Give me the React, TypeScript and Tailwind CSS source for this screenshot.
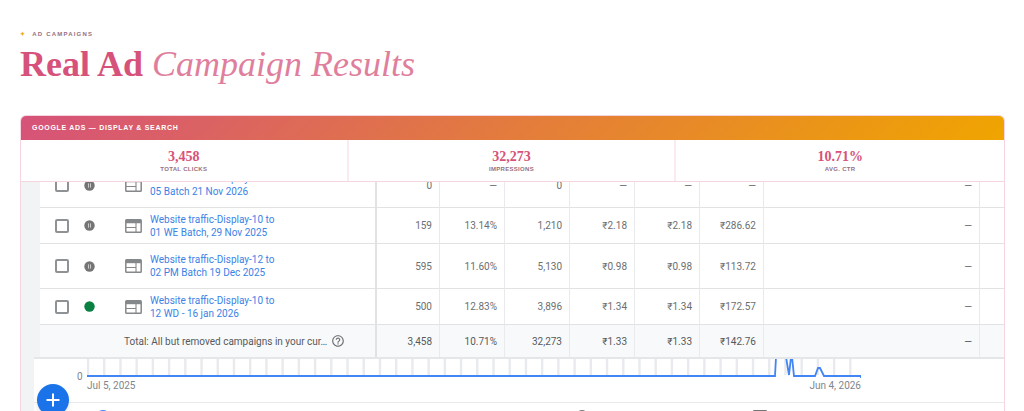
import { MdHelpOutline } from 'react-icons/md'

type Campaign = {
    name: string[]
    active: boolean
    values: string[]
    height: string
}

const stats = [
    { value: '3,458', label: 'Total Clicks' },
    { value: '32,273', label: 'Impressions' },
    { value: '10.71%', label: 'Avg. CTR' },
]

const campaigns: Campaign[] = [
    { name: ['Website traffic-Display-08 to', '05 Batch 21 Nov 2026'], active: false, values: ['0', '—', '0', '—', '—', '—', '—'], height: 'h-[45px]' },
    { name: ['Website traffic-Display-10 to', '01 WE Batch, 29 Nov 2025'], active: false, values: ['159', '13.14%', '1,210', '₹2.18', '₹2.18', '₹286.62', '—'], height: 'h-9' },
    { name: ['Website traffic-Display-12 to', '02 PM Batch 19 Dec 2025'], active: false, values: ['595', '11.60%', '5,130', '₹0.98', '₹0.98', '₹113.72', '—'], height: 'h-[45px]' },
    { name: ['Website traffic-Display-10 to', '12 WD - 16 jan 2026'], active: true, values: ['500', '12.83%', '3,896', '₹1.34', '₹1.34', '₹172.57', '—'], height: 'h-9' },
]

const totals = ['3,458', '10.71%', '32,273', '₹1.33', '₹1.33', '₹142.76', '—']

const gridLines = Array.from({ length: 48 }, (_, i) => 1 + i * 16.22)

function StatusIcon({ active }: { active: boolean }) {
    return (
        <svg viewBox="0 0 11 11" className="block size-[11px]">
            <circle cx="5.5" cy="5.5" r="5.2" fill={active ? '#0b8043' : '#757575'} />
            {!active && <path d="M4.5 3.4V7.6M6.5 3.4V7.6" stroke="#d5d6d7" strokeWidth="0.9" />}
        </svg>
    )
}

function DisplayIcon() {
    return (
        <svg viewBox="0 0 17 14" className="h-3.5 w-[17px] shrink-0" fill="none" stroke="#85888b">
            <rect x="0.8" y="0.8" width="15.4" height="12.4" rx="0.8" strokeWidth="1.5" />
            <path d="M1 2.5H16" strokeWidth="3.4" />
            <path d="M1 8.5H11M11 4V13" strokeWidth="1.1" />
        </svg>
    )
}

function StatsBar() {
    return (
        <div className="grid grid-cols-3 border-b border-[#f5d5df] bg-white">
            {stats.map((s) => (
                <div key={s.label} className="flex h-[41px] flex-col items-center justify-center border-r-2 border-[#fbeaf0] pt-0.5 last:border-r-0">
                    <span className="font-['Liberation_Serif',serif] text-sm leading-[14px] font-bold text-[#d6527a]">{s.value}</span>
                    <span className="text-[6px] leading-[10px] font-bold tracking-wider text-[#96707f] uppercase">{s.label}</span>
                </div>
            ))}
        </div>
    )
}

function CampaignTable() {
    return (
        <table className="-mt-[19px] w-full table-fixed border-separate border-spacing-0 bg-white text-[10px] text-[#6b6f73]">
            <colgroup>
                <col className="w-[35px]" />
                <col className="w-[30px]" />
                <col className="w-[272px]" />
                <col className="w-[63px]" />
                <col className="w-[65px]" />
                <col className="w-[65px]" />
                <col className="w-[65px]" />
                <col className="w-[65px]" />
                <col className="w-16" />
                <col />
                <col className="w-6" />
            </colgroup>
            <tbody>
                {campaigns.map((c) => (
                    <tr key={c.name[1]} className={c.height}>
                        <td className="border-b border-[#e0e2e4] pl-[15px]">
                            <input
                                type="checkbox"
                                aria-label={c.name.join(' ')}
                                className="block size-3.5 appearance-none rounded-[2px] border-2 border-[#8f9295] bg-white"
                            />
                        </td>
                        <td className="border-b border-[#e0e2e4] pl-[9px]">
                            <StatusIcon active={c.active} />
                        </td>
                        <td className="border-r-2 border-b border-[#e0e2e4] pl-5">
                            <div className="flex items-center gap-2">
                                <DisplayIcon />
                                <a href="#" className="leading-[13px] text-[#3b82e6]">
                                    {c.name[0]}
                                    <br />
                                    {c.name[1]}
                                </a>
                            </div>
                        </td>
                        {c.values.map((v, i) => (
                            <td key={i} className="border-r border-b border-r-[#e8eaed] border-b-[#e0e2e4] pr-[7px] text-right">{v}</td>
                        ))}
                        <td className="border-b border-[#e0e2e4]" />
                    </tr>
                ))}
                <tr className="h-8 bg-[#f8f9fa] text-[#55595d]">
                    <td />
                    <td />
                    <td className="border-r-2 border-[#e0e2e4] pl-[19px]">
                        <div className="flex items-center gap-1">
                            <span>Total: All but removed campaigns in your cur…</span>
                            <MdHelpOutline className="size-3.5 text-[#6b6f73]" />
                        </div>
                    </td>
                    {totals.map((v, i) => (
                        <td key={i} className="border-r border-[#e8eaed] pr-[7px] text-right">{v}</td>
                    ))}
                    <td />
                </tr>
            </tbody>
        </table>
    )
}

function ClicksChart() {
    return (
        <div className="ml-[13px] border-t-2 border-[#e4e6e9] bg-white text-[10px] text-[#80868b]">
            <div className="flex h-11 border-b border-[#e8eaed] pr-[143px] pl-9">
                <span className="w-[17px] pt-[11px] pl-[7px] leading-[14px]">0</span>
                <div className="flex-1">
                    <svg viewBox="0 0 774 20" preserveAspectRatio="none" className="block h-5 w-full">
                        {gridLines.map((x) => (
                            <path key={x} d={`M${x} 0V16`} stroke="#e8eaed" strokeWidth="2.4" />
                        ))}
                        <path
                            d="M0 17H688L689 -2M699 -2L702 16L704 -2M705 -2L707 17H728L731 9H733L737 17H774V19"
                            fill="none"
                            stroke="#4285f4"
                            strokeWidth="1.8"
                        />
                    </svg>
                    <div className="flex justify-between leading-[14px]">
                        <span>Jul 5, 2025</span>
                        <span>Jun 4, 2026</span>
                    </div>
                </div>
            </div>
            {/* Toolbar under the chart, mostly below the fold */}
            <div className="flex h-10 pt-[7px] pr-[237px] pl-[62px]">
                <span className="size-3.5 rounded-full bg-[#4285f4]" />
                <span className="ml-auto size-3 rounded-full bg-[#757575]" />
                <span className="ml-[165px] size-3.5 rounded-[1px] border-2 border-[#757575]" />
            </div>
        </div>
    )
}

export default function App() {
    return (
        <section className="flex h-screen flex-col overflow-hidden bg-white pt-[30px] pr-[19px] pl-5 font-['Liberation_Sans',Arial,sans-serif]">
            <p className="flex items-center gap-1.5 text-[6px] leading-2 font-bold tracking-[0.2em] text-[#96707f] uppercase">
                <span className="text-[#f0a500]">✦</span>
                Ad Campaigns
            </p>
            <h1 className="mt-1 font-['Liberation_Serif',serif] text-4xl leading-11 font-bold text-[#d6527a]">
                Real Ad <em className="font-normal text-[#e07f9d]">Campaign Results</em>
            </h1>

            <div className="mt-[29px] flex min-h-0 flex-1 flex-col overflow-hidden rounded-t-md border border-b-0 border-[#f5d5df]">
                <h2 className="bg-linear-135/srgb from-[#d6527a] to-[#f0a500] px-[11px] py-1.5 text-[7px] leading-3 font-bold tracking-widest text-white uppercase">
                    Google Ads — Display &amp; Search
                </h2>
                <StatsBar />
                <div className="relative flex-1 overflow-hidden bg-[#f1f3f4] font-[Roboto,sans-serif]">
                    <div className="pl-[19px]">
                        <CampaignTable />
                    </div>
                    <ClicksChart />
                    <button aria-label="New campaign" className="absolute top-[202px] left-4 flex size-8 items-center justify-center rounded-full bg-[#1a73e8] text-white shadow-md">
                        <svg viewBox="0 0 14 14" className="size-3.5" stroke="currentColor" strokeWidth="2">
                            <path d="M7 0.5V13.5M0.5 7H13.5" />
                        </svg>
                    </button>
                </div>
            </div>
        </section>
    )
}
